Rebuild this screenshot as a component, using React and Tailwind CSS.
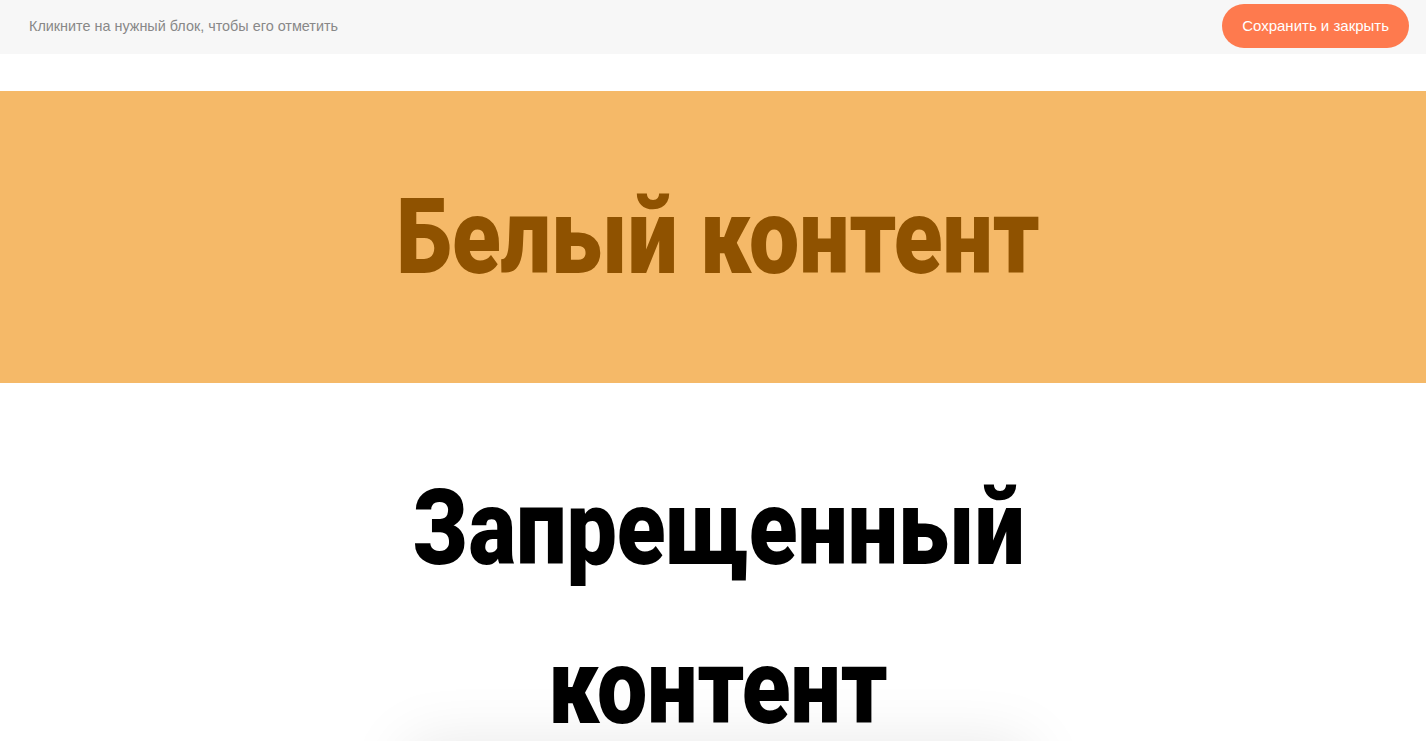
import React from 'react';

const App = () => {
  return (
    <div className="min-h-screen bg-white font-['Liberation_Sans',Arial,sans-serif]">
      {/* Top bar */}
      <div className="flex h-[54px] items-center justify-between bg-[#f7f7f7] pl-[29px] pr-[17px]">
        <p className="text-[14.4px] text-[#888888]">Кликните на нужный блок, чтобы его отметить</p>
        <button className="mt-[-2px] h-[44px] rounded-full bg-[#fe7a4e] px-5 text-[15px] text-white">
          Сохранить и закрыть
        </button>
      </div>

      <div className="h-[37px]" />

      {/* Highlighted block */}
      <section className="flex h-[292px] items-center justify-center bg-[#f5b968] pl-[10px]">
        <h2 className="inline-block scale-x-[0.845] font-['Roboto',sans-serif] text-[106px] font-black leading-[1.5] whitespace-nowrap text-[#8f5200]">
          Белый контент
        </h2>
      </section>

      {/* Forbidden block */}
      <section className="flex justify-center pt-[66px] pl-[10px]">
        <h2 className="w-[900px] text-center font-['Roboto',sans-serif] text-[106px] font-black leading-[1.5] text-black">
          <span className="inline-block scale-x-[0.845] whitespace-nowrap">Запрещенный</span>
          <br />
          <span className="inline-block scale-x-[0.845] whitespace-nowrap">контент</span>
        </h2>
      </section>

      <div className="relative mx-auto mt-[-22px] h-[200px] w-[620px] translate-x-[5px] bg-white shadow-[0_0_60px_rgba(0,0,0,0.1)]" />
    </div>
  );
};

export default App;
